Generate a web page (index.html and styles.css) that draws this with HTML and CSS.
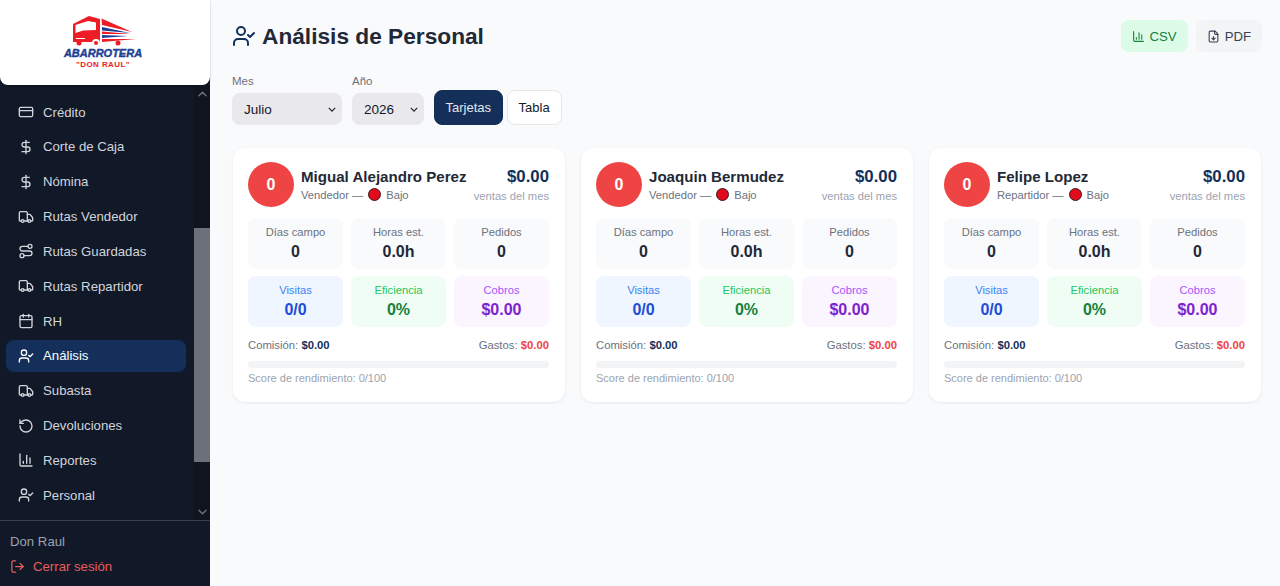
FILE: index.html
```html
<!DOCTYPE html>
<html lang="es">
  <head>
    <meta charset="UTF-8" />
    <meta name="viewport" content="width=device-width, initial-scale=1.0" />
    <title>Análisis de Personal</title>
    <link rel="stylesheet" href="styles.css">
  </head>
  <body>
    <svg class="icon-defs" aria-hidden="true">
      <symbol id="i-card" viewBox="0 0 24 24"><rect x="2" y="5" width="20" height="14" rx="2"/><path d="M2 10h20"/></symbol>
      <symbol id="i-dollar" viewBox="0 0 24 24"><path d="M12 2v20"/><path d="M17 5H9.5a3.5 3.5 0 0 0 0 7h5a3.5 3.5 0 0 1 0 7H6"/></symbol>
      <symbol id="i-truck" viewBox="0 0 24 24"><path d="M14 18V6a2 2 0 0 0-2-2H4a2 2 0 0 0-2 2v11a1 1 0 0 0 1 1h2"/><path d="M15 18H9"/><path d="M19 18h2a1 1 0 0 0 1-1v-3.65a1 1 0 0 0-.22-.624l-3.48-4.35A1 1 0 0 0 17.52 8H14"/><circle cx="17" cy="18" r="2"/><circle cx="7" cy="18" r="2"/></symbol>
      <symbol id="i-route" viewBox="0 0 24 24"><circle cx="6" cy="19" r="3"/><path d="M9 19h8.5a3.5 3.5 0 0 0 0-7h-11a3.5 3.5 0 0 1 0-7H15"/><circle cx="18" cy="5" r="3"/></symbol>
      <symbol id="i-calendar" viewBox="0 0 24 24"><path d="M8 2v4"/><path d="M16 2v4"/><rect x="3" y="4" width="18" height="18" rx="2"/><path d="M3 10h18"/></symbol>
      <symbol id="i-user" viewBox="0 0 24 24"><path d="M16 21v-2a4 4 0 0 0-4-4H6a4 4 0 0 0-4 4v2"/><circle cx="9" cy="7" r="4"/><path d="M16 11l2 2 4-4"/></symbol>
      <symbol id="i-undo" viewBox="0 0 24 24"><path d="M3 12a9 9 0 1 0 9-9 9.75 9.75 0 0 0-6.74 2.74L3 8"/><path d="M3 3v5h5"/></symbol>
      <symbol id="i-chart" viewBox="0 0 24 24"><path d="M3 3v16a2 2 0 0 0 2 2h16"/><path d="M18 17V9"/><path d="M13 17V5"/><path d="M8 17v-3"/></symbol>
      <symbol id="i-logout" viewBox="0 0 24 24"><path d="M9 21H5a2 2 0 0 1-2-2V5a2 2 0 0 1 2-2h4"/><path d="M16 17l5-5-5-5"/><path d="M21 12H9"/></symbol>
      <symbol id="i-file" viewBox="0 0 24 24"><path d="M15 2H6a2 2 0 0 0-2 2v16a2 2 0 0 0 2 2h12a2 2 0 0 0 2-2V7Z"/><path d="M14 2v4a2 2 0 0 0 2 2h4"/><path d="M12 18v-6"/><path d="M9 15l3 3 3-3"/></symbol>
    </svg>

    <aside class="sidebar">
      <div class="brand">
        <svg class="brand-truck" viewBox="70 13 66 32" aria-hidden="true">
          <path fill="#ee1c25" d="M72 23 L88 15 L99 18 V41 H72 Z"/>
          <path fill="#fff" d="M74.500 24 L87 20 L95 21.500 V29 L82 29.500 L74.500 32 Z"/>
          <path fill="#fff" d="M75 37 H84 V38 H75 Z"/>
          <path fill="#ee1c25" d="M100.500 17.500 L131 31 L101 24 Z"/>
          <path fill="#1c3f94" d="M101 26 L129 32 L101 29.500 Z"/>
          <path fill="#ee1c25" d="M101 30.500 L130 33 L101 33 Z"/>
          <path fill="#1c3f94" d="M101 34 L127 35 L101 37 Z"/>
          <path fill="#ee1c25" d="M101 38 L135 38 L101 41 Z"/>
          <circle cx="78" cy="42" r="2.500" fill="#ee1c25"/>
          <circle cx="95" cy="42" r="3" fill="#ee1c25" stroke="#fff"/>
          <circle cx="117" cy="42" r="2.500" fill="#ee1c25"/>
        </svg>
        <div class="brand-name">ABARROTERA</div>
        <div class="brand-sub">"DON RAUL"</div>
      </div>

      <div class="nav-wrap">
        <nav class="nav">
          <a class="nav-item"><svg class="nav-icon"><use href="#i-card"/></svg>Crédito</a>
          <a class="nav-item"><svg class="nav-icon"><use href="#i-dollar"/></svg>Corte de Caja</a>
          <a class="nav-item"><svg class="nav-icon"><use href="#i-dollar"/></svg>Nómina</a>
          <a class="nav-item"><svg class="nav-icon"><use href="#i-truck"/></svg>Rutas Vendedor</a>
          <a class="nav-item"><svg class="nav-icon"><use href="#i-route"/></svg>Rutas Guardadas</a>
          <a class="nav-item"><svg class="nav-icon"><use href="#i-truck"/></svg>Rutas Repartidor</a>
          <a class="nav-item"><svg class="nav-icon"><use href="#i-calendar"/></svg>RH</a>
          <a class="nav-item active"><svg class="nav-icon"><use href="#i-user"/></svg>Análisis</a>
          <a class="nav-item"><svg class="nav-icon"><use href="#i-truck"/></svg>Subasta</a>
          <a class="nav-item"><svg class="nav-icon"><use href="#i-undo"/></svg>Devoluciones</a>
          <a class="nav-item"><svg class="nav-icon"><use href="#i-chart"/></svg>Reportes</a>
          <a class="nav-item"><svg class="nav-icon"><use href="#i-user"/></svg>Personal</a>
        </nav>
        <div class="scrollbar">
          <svg class="scroll-arrow up" viewBox="0 0 10 6"><path d="M1 5l4-4 4 4"/></svg>
          <div class="scroll-thumb"></div>
          <svg class="scroll-arrow down" viewBox="0 0 10 6"><path d="M1 1l4 4 4-4"/></svg>
        </div>
      </div>

      <div class="side-foot">
        <div class="side-user">Don Raul</div>
        <a class="logout"><svg class="logout-icon"><use href="#i-logout"/></svg>Cerrar sesión</a>
      </div>
    </aside>

    <main class="main">
      <header class="page-head">
        <h1 class="title"><svg class="title-icon"><use href="#i-user"/></svg>Análisis de Personal</h1>
        <div class="exports">
          <button class="export csv"><svg class="export-icon"><use href="#i-chart"/></svg>CSV</button>
          <button class="export pdf"><svg class="export-icon"><use href="#i-file"/></svg>PDF</button>
        </div>
      </header>

      <div class="filters">
        <div class="field">
          <label for="mes">Mes</label>
          <select id="mes" class="sel-mes"><option>Julio</option></select>
        </div>
        <div class="field">
          <label for="anio">Año</label>
          <select id="anio" class="sel-anio"><option>2026</option></select>
        </div>
        <div class="views">
          <button class="view on">Tarjetas</button>
          <button class="view">Tabla</button>
        </div>
      </div>

      <section class="cards">
        <article class="card">
          <div class="card-top">
            <div class="avatar">0</div>
            <div class="who">
              <div class="name">Migual Alejandro Perez</div>
              <div class="role">Vendedor — <span class="dot"></span> Bajo</div>
            </div>
            <div class="sales">
              <div class="sales-num">$0.00</div>
              <div class="sales-label">ventas del mes</div>
            </div>
          </div>
          <div class="stats">
            <div class="stat"><span class="stat-label">Días campo</span><b class="stat-val">0</b></div>
            <div class="stat"><span class="stat-label">Horas est.</span><b class="stat-val">0.0h</b></div>
            <div class="stat"><span class="stat-label">Pedidos</span><b class="stat-val">0</b></div>
            <div class="stat blue"><span class="stat-label">Visitas</span><b class="stat-val">0/0</b></div>
            <div class="stat green"><span class="stat-label">Eficiencia</span><b class="stat-val">0%</b></div>
            <div class="stat purple"><span class="stat-label">Cobros</span><b class="stat-val">$0.00</b></div>
          </div>
          <div class="money">
            <span>Comisión: <b class="navy">$0.00</b></span>
            <span>Gastos: <b class="red">$0.00</b></span>
          </div>
          <div class="bar"></div>
          <div class="score">Score de rendimiento: 0/100</div>
        </article>

        <article class="card">
          <div class="card-top">
            <div class="avatar">0</div>
            <div class="who">
              <div class="name">Joaquin Bermudez</div>
              <div class="role">Vendedor — <span class="dot"></span> Bajo</div>
            </div>
            <div class="sales">
              <div class="sales-num">$0.00</div>
              <div class="sales-label">ventas del mes</div>
            </div>
          </div>
          <div class="stats">
            <div class="stat"><span class="stat-label">Días campo</span><b class="stat-val">0</b></div>
            <div class="stat"><span class="stat-label">Horas est.</span><b class="stat-val">0.0h</b></div>
            <div class="stat"><span class="stat-label">Pedidos</span><b class="stat-val">0</b></div>
            <div class="stat blue"><span class="stat-label">Visitas</span><b class="stat-val">0/0</b></div>
            <div class="stat green"><span class="stat-label">Eficiencia</span><b class="stat-val">0%</b></div>
            <div class="stat purple"><span class="stat-label">Cobros</span><b class="stat-val">$0.00</b></div>
          </div>
          <div class="money">
            <span>Comisión: <b class="navy">$0.00</b></span>
            <span>Gastos: <b class="red">$0.00</b></span>
          </div>
          <div class="bar"></div>
          <div class="score">Score de rendimiento: 0/100</div>
        </article>

        <article class="card">
          <div class="card-top">
            <div class="avatar">0</div>
            <div class="who">
              <div class="name">Felipe Lopez</div>
              <div class="role">Repartidor — <span class="dot"></span> Bajo</div>
            </div>
            <div class="sales">
              <div class="sales-num">$0.00</div>
              <div class="sales-label">ventas del mes</div>
            </div>
          </div>
          <div class="stats">
            <div class="stat"><span class="stat-label">Días campo</span><b class="stat-val">0</b></div>
            <div class="stat"><span class="stat-label">Horas est.</span><b class="stat-val">0.0h</b></div>
            <div class="stat"><span class="stat-label">Pedidos</span><b class="stat-val">0</b></div>
            <div class="stat blue"><span class="stat-label">Visitas</span><b class="stat-val">0/0</b></div>
            <div class="stat green"><span class="stat-label">Eficiencia</span><b class="stat-val">0%</b></div>
            <div class="stat purple"><span class="stat-label">Cobros</span><b class="stat-val">$0.00</b></div>
          </div>
          <div class="money">
            <span>Comisión: <b class="navy">$0.00</b></span>
            <span>Gastos: <b class="red">$0.00</b></span>
          </div>
          <div class="bar"></div>
          <div class="score">Score de rendimiento: 0/100</div>
        </article>
      </section>
    </main>
  </body>
</html>
```

FILE: styles.css
```css
* {
  box-sizing: border-box;
}
html,
body {
  height: 100%;
}
body {
  margin: 0;
  display: flex;
  overflow: hidden;
  font-family: "Liberation Sans", Arial, sans-serif;
  background-color: #f9fafb;
  color: #111827;
}
svg {
  fill: none;
  stroke: currentColor;
  stroke-width: 2;
  stroke-linecap: round;
  stroke-linejoin: round;
}
.icon-defs {
  display: none;
}

/* sidebar */
.sidebar {
  width: 210px;
  height: 586px;
  flex-shrink: 0;
  display: flex;
  flex-direction: column;
  background-color: #111827;
}
.brand {
  height: 85px;
  flex-shrink: 0;
  display: flex;
  flex-direction: column;
  align-items: center;
  background: #fff;
  border-radius: 0 0 8px 8px;
  padding: 14px 4px 0 0;
  box-shadow: 0 1px 2px rgba(0, 0, 0, 0.3);
}
.brand-truck {
  width: 66px;
  height: 32px;
  stroke: none;
  margin-left: 1px;
}
.brand-truck path {
  stroke: none;
}
.brand-name {
  margin-top: 1px;
  font-size: 11px;
  line-height: 12px;
  font-weight: bold;
  font-style: italic;
  color: #1c3f94;
  -webkit-text-stroke: 0.4px #1c3f94;
}
.brand-sub {
  font-size: 8px;
  line-height: 10px;
  margin-top: 1px;
  font-weight: bold;
  letter-spacing: 0.4px;
  color: #ee1c25;
}
.nav-wrap {
  flex: 1;
  display: flex;
  min-height: 0;
}
.nav {
  flex: 1;
  padding: 11px 8px 0 6px;
}
.nav-item {
  height: 32px;
  margin-bottom: 2.85px;
  display: flex;
  align-items: center;
  gap: 9px;
  padding-left: 12px;
  border-radius: 8px;
  font-size: 13.2px;
  color: #d1d5db;
}
.nav-item.active {
  background-color: #14305a;
  color: #fff;
}
.nav-icon {
  width: 16px;
  height: 16px;
  flex-shrink: 0;
}
.scrollbar {
  width: 16px;
  flex-shrink: 0;
  display: flex;
  flex-direction: column;
  align-items: center;
  background-color: #0f141e;
}
.scroll-arrow {
  width: 9px;
  height: 6px;
  color: #6b6f78;
  stroke-width: 1.6;
}
.scroll-arrow.up {
  margin-top: 6px;
}
.scroll-thumb {
  width: 16px;
  height: 234px;
  margin-top: 131px;
  background-color: #6e7079;
}
.scroll-arrow.down {
  margin-top: 47px;
}
.side-foot {
  height: 66px;
  flex-shrink: 0;
  border-top: 1px solid #374151;
  padding: 13px 10px 0;
}
.side-user {
  font-size: 13.2px;
  line-height: 15px;
  color: #9ca3af;
}
.logout {
  display: flex;
  align-items: center;
  gap: 8px;
  margin-top: 10px;
  font-size: 13.2px;
  line-height: 15px;
  color: #e85d5d;
}
.logout-icon {
  width: 15px;
  height: 15px;
}

/* main */
.main {
  flex: 1;
  min-width: 0;
  padding: 20px 18px 0 22px;
}
.page-head {
  display: flex;
  justify-content: space-between;
  height: 32px;
}
.title {
  margin: 0;
  display: flex;
  align-items: center;
  gap: 6px;
  font-size: 22.7px;
  line-height: 32px;
  color: #1f2937;
}
.title-icon {
  width: 24px;
  height: 24px;
  color: #14305a;
}
.exports {
  display: flex;
  gap: 8px;
}
.export {
  height: 32px;
  display: flex;
  align-items: center;
  gap: 5px;
  border: none;
  border-radius: 8px;
  padding: 0 11px;
  font-family: inherit;
  font-size: 13.2px;
}
.export.csv {
  background-color: #dcfce7;
  color: #15803d;
}
.export.pdf {
  background-color: #f3f4f6;
  color: #374151;
}
.export-icon {
  width: 13px;
  height: 13px;
}
.filters {
  display: flex;
  align-items: flex-end;
  gap: 10px;
  margin-top: 22px;
}
.field {
  display: flex;
  flex-direction: column;
  gap: 4px;
}
.field label {
  font-size: 11.5px;
  line-height: 15px;
  color: #6b7280;
}
.field select {
  appearance: none;
  height: 32px;
  border: none;
  border-radius: 8px;
  background: #e9e9ed url("data:image/svg+xml,%3Csvg xmlns='http://www.w3.org/2000/svg' viewBox='0 0 10 6'%3E%3Cpath d='M1 1l4 4 4-4' fill='none' stroke='%23222' stroke-width='1.5'/%3E%3C/svg%3E") no-repeat right 6px center / 8px 5px;
  padding: 0 12px;
  font-family: inherit;
  font-size: 13.5px;
  color: #111827;
}
.sel-mes {
  width: 110px;
}
.sel-anio {
  width: 72px;
}
.views {
  display: flex;
  gap: 4px;
}
.view {
  height: 35px;
  border: 1px solid #e5e7eb;
  border-radius: 8px;
  background: #fff;
  padding: 0 11px;
  font-family: inherit;
  font-size: 13px;
  color: #111827;
}
.view.on {
  background-color: #14305a;
  border-color: #14305a;
  color: #e5e7eb;
  padding: 0 10.5px;
}
.cards {
  display: flex;
  gap: 16px;
  margin-top: 23px;
  margin-left: 1px;
}
.card {
  width: 332px;
  height: 254px;
  background: #fff;
  border-radius: 12px;
  padding: 14px 16px 14px 15px;
  box-shadow: 0 1px 3px rgba(0, 0, 0, 0.08);
}
.card-top {
  display: flex;
  align-items: center;
  gap: 7px;
  height: 45px;
}
.avatar {
  width: 46px;
  height: 45px;
  flex-shrink: 0;
  display: flex;
  align-items: center;
  justify-content: center;
  border-radius: 50%;
  background-color: #ef4444;
  color: #fff;
  font-weight: bold;
  font-size: 16px;
}
.who {
  flex: 1;
  min-width: 0;
}
.name {
  font-size: 15.1px;
  line-height: 18px;
  font-weight: bold;
  color: #1f2937;
  white-space: nowrap;
}
.role {
  display: flex;
  align-items: center;
  gap: 3px;
  margin-top: 2px;
  font-size: 11.2px;
  line-height: 14px;
  color: #6b7280;
}
.dot {
  width: 13px;
  height: 13px;
  margin: 0 2px;
  border-radius: 50%;
  background-color: #e00b1c;
  border: 1px solid #3a1a1c;
}
.sales {
  text-align: right;
  white-space: nowrap;
}
.sales-num {
  font-size: 16.8px;
  line-height: 20px;
  font-weight: bold;
  color: #14305a;
}
.sales-label {
  margin-top: 2px;
  font-size: 11.2px;
  line-height: 14px;
  color: #9ca3af;
}
.stats {
  display: grid;
  grid-template-columns: repeat(3, 1fr);
  gap: 7px 8px;
  margin-top: 11px;
}
.stat {
  height: 51px;
  display: flex;
  flex-direction: column;
  align-items: center;
  padding-top: 8px;
  border-radius: 8px;
  background-color: #f9fafb;
}
.stat-label {
  font-size: 11.2px;
  line-height: 13px;
  color: #6b7280;
}
.stat-val {
  margin-top: 3px;
  font-size: 16px;
  line-height: 20px;
  color: #1f2937;
}
.stat.blue {
  background-color: #eff6ff;
}
.stat.blue .stat-label {
  color: #3b82f6;
}
.stat.blue .stat-val {
  color: #1d4ed8;
}
.stat.green {
  background-color: #f0fdf4;
}
.stat.green .stat-label {
  color: #22c55e;
}
.stat.green .stat-val {
  color: #15803d;
}
.stat.purple {
  background-color: #faf5ff;
}
.stat.purple .stat-label {
  color: #a855f7;
}
.stat.purple .stat-val {
  color: #7e22ce;
}
.money {
  display: flex;
  justify-content: space-between;
  margin-top: 11px;
  font-size: 11.3px;
  line-height: 14px;
  color: #6b7280;
}
.navy {
  color: #14305a;
}
.red {
  color: #ef4444;
}
.bar {
  height: 7px;
  margin-top: 9px;
  border-radius: 4px;
  background-color: #f3f4f6;
}
.score {
  margin-top: 3px;
  font-size: 11px;
  line-height: 14px;
  color: #9ca3af;
}
```
